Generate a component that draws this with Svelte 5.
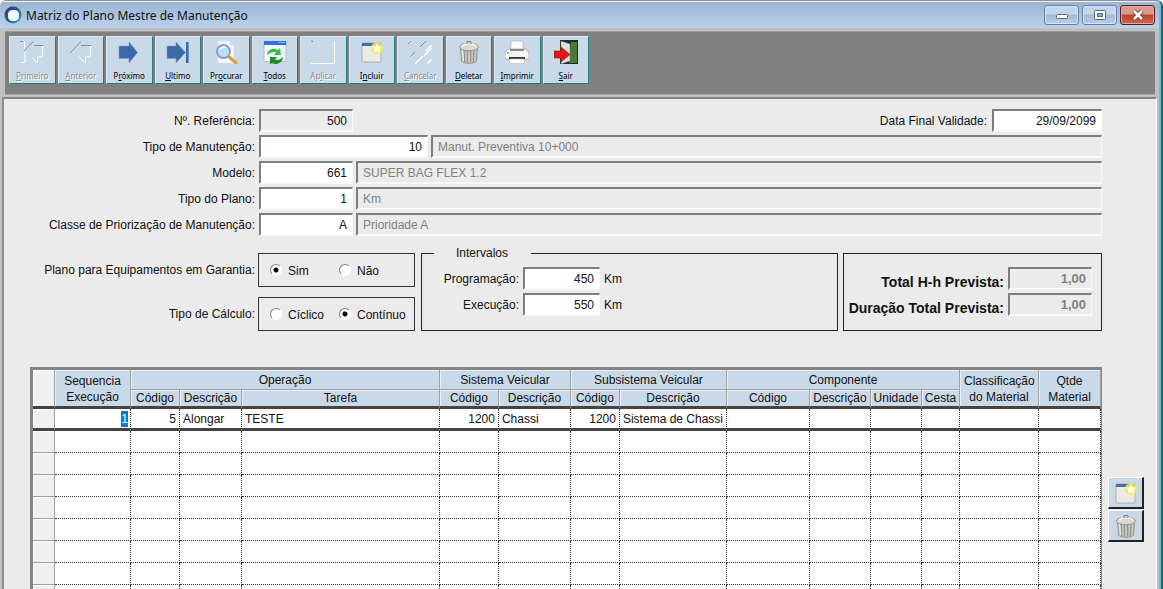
<script lang="ts">
    const tools = [
        { icon: 'first', before: '', key: 'P', after: 'rimeiro', disabled: true },
        { icon: 'prev', before: '', key: 'A', after: 'nterior', disabled: true },
        { icon: 'next', before: 'P', key: 'r', after: 'óximo' },
        { icon: 'last', before: '', key: 'U', after: 'ltimo' },
        { icon: 'search', before: 'Pr', key: 'o', after: 'curar' },
        { icon: 'all', before: '', key: 'T', after: 'odos' },
        { icon: 'apply', before: 'Ap', key: 'l', after: 'icar', disabled: true },
        { icon: 'add', before: 'I', key: 'n', after: 'cluir' },
        { icon: 'cancel', before: '', key: 'C', after: 'ancelar', disabled: true },
        { icon: 'trash', before: '', key: 'D', after: 'eletar' },
        { icon: 'print', before: '', key: 'I', after: 'mprimir' },
        { icon: 'exit', before: '', key: 'S', after: 'air' }
    ]

    const lookups = [
        { id: 'tipo', label: 'Tipo de Manutenção:', value: '10', text: 'Manut. Preventiva 10+000', wide: true },
        { id: 'modelo', label: 'Modelo:', value: '661', text: 'SUPER BAG FLEX 1.2' },
        { id: 'plano', label: 'Tipo do Plano:', value: '1', text: 'Km' },
        { id: 'classe', label: 'Classe de Priorização de Manutenção:', value: 'A', text: 'Prioridade A' }
    ]

    // 0 leaves the column free to take the remaining width
    const widths = [22, 76, 49, 62, 0, 59, 72, 49, 107, 83, 61, 51, 38, 79, 62]
    const columns = ['Código', 'Descrição', 'Tarefa', 'Código', 'Descrição', 'Código', 'Descrição', 'Código', 'Descrição', 'Unidade', 'Cesta']
    const current = ['5', 'Alongar', 'TESTE', '1200', 'Chassi', '1200', 'Sistema de Chassi', '', '', '', '', '', '']
    const emptyRows = Array(12).fill(0)

    let garantia = $state('sim')
    let calculo = $state('continuo')
</script>

{#snippet glyph(name)}
    <svg class="glyph" viewBox="0 0 24 24" aria-hidden="true">
        {#if name === 'first'}
            <path d="M4.500 1v9M5 12v10.500H1M22.500 6v11h-5v5.500h-1l-4-5" fill="none" stroke="#fff" />
            <path d="M0 1.500h3M4 10.500L13.500 1.500M14 5.500h9" fill="none" stroke="#8c8c8c" />
        {:else if name === 'prev'}
            <path d="M21.500 6v11h-5v5.500h-1l-5.500-6" fill="none" stroke="#fff" />
            <path d="M1 13L12 1.500M12 5.500h10" fill="none" stroke="#8c8c8c" />
        {:else if name === 'next'}
            <path d="M2 6h10V2l8.500 10.500L12 23v-4.500H2z" fill="#3a69a8" stroke="#7fa0cc" stroke-width=".6" />
        {:else if name === 'last'}
            <path d="M1 6h9V2l9.500 10.500L10 23v-4.500H1z" fill="#3a69a8" stroke="#7fa0cc" stroke-width=".6" />
            <path d="M20 2h2.600v21H20z" fill="#3a69a8" />
        {:else if name === 'search'}
            <path d="M4 1h12l4 4v18H4z" fill="#f4f7fb" stroke="#d7dfe9" stroke-width=".7" />
            <path d="M16 1v4h4" fill="#cfd8e3" />
            <path d="M15 17l7 6" stroke="#e09a35" stroke-width="3" stroke-linecap="round" />
            <circle cx="9.500" cy="11.500" r="6.500" fill="#b8ddfa" stroke="#8b9cba" stroke-width="1.800" />
            <path d="M5.500 10a4.500 4.500 0 0 1 6-2.500" fill="none" stroke="#fff" stroke-width="1.500" />
        {:else if name === 'all'}
            <rect x="1" y="1.500" width="22" height="20" rx="1" fill="#f3f6fb" stroke="#a7b5cd" stroke-width=".8" />
            <path d="M1 1h22v4H1z" fill="#3270dc" />
            <path d="M15 2h7v1h-7z" fill="#8fb6f3" />
            <path d="M4 15c0-5 6-8 11-5l2-2 1 7h-7l2-2.500c-3-1-5 0-9 2.500z" fill="#36c043" />
            <path d="M20 17c0 5-6 9-11 6l-2 1.500V17h7l-2 2.500c3 1 5 .5 8-2.500z" fill="#1d8d2c" />
        {:else if name === 'apply'}
            <path d="M23.500 1v22.500H0" fill="none" stroke="#fff" />
            <path d="M0 1h1.500v1" fill="none" stroke="#909090" />
        {:else if name === 'add'}
            <rect x="2" y="3" width="19" height="19" rx="1" fill="#eceae4" stroke="#aaa9a3" stroke-width=".9" />
            <path d="M2 3h19v3H2z" fill="#416fb4" />
            <circle cx="17" cy="8" r="6" fill="#f4ef45" opacity=".85" />
            <path d="M17 3l1.500 3.300 3.500.4-2.600 2.400.8 3.600-3.200-1.800-3.200 1.800.8-3.600L12 6.700l3.500-.4z" fill="#fffff0" />
        {:else if name === 'cancel'}
            <path d="M0 4l3-3M12 7l6-6M2 17l5-5" stroke="#8c8c8c" />
            <path d="M18 11l6-6M7 24l8-8M16 16l8-8M19 24l5-5" stroke="#fff" stroke-width="1.400" />
        {:else if name === 'trash'}
            <path d="M3.500 8h17l-1 13c-1 3-14 3-15 0z" fill="#c6c6bf" stroke="#85857e" stroke-width=".8" />
            <path d="M7 10l.7 12M10.300 10v12.500M13.700 10v12.500M17 10l-.7 12" stroke="#8b8b83" />
            <path d="M5.500 10l1 11" stroke="#efefea" stroke-width="1.300" />
            <ellipse cx="12" cy="7" rx="9.500" ry="3.800" fill="#dadad4" stroke="#84847d" stroke-width=".8" />
            <path d="M5 6c3-3 11-3 14 0" fill="none" stroke="#f7f7f4" stroke-width="1.500" />
            <path d="M10 4V1.500h4V4" fill="#ccc" stroke="#777770" stroke-width=".9" />
        {:else if name === 'print'}
            <path d="M6 11V1h12v10z" fill="#fafafa" stroke="#b5b5b5" stroke-width=".7" />
            <path d="M4 9h16c3 1 4 4 4 7v3H0v-3c0-3 1-6 4-7z" fill="#f4f4f4" stroke="#a5a5a5" stroke-width=".7" />
            <path d="M5 9h14v2H5z" fill="#8a8a8a" />
            <path d="M4 17h16v2H4z" fill="#333" />
            <path d="M5 19h14v4.500H5z" fill="#fff" stroke="#bcbcbc" stroke-width=".6" />
            <path d="M2 12h1.500v1.500H2z" fill="#42c540" />
        {:else if name === 'exit'}
            <path d="M6 0h18v24H6z" fill="#202d20" />
            <path d="M17 2h6v21h-8z" fill="#497a35" />
            <path d="M7 1l9 3v17l-9 3z" fill="#dfe2e5" stroke="#777" stroke-width=".6" />
            <path d="M0 11h7V7l9 7.500L7 22v-4H0z" fill="#e01a1a" stroke="#931515" stroke-width=".6" />
        {/if}
    </svg>
{/snippet}

<div class="window">
    <header class="title-bar">
        <svg class="logo" viewBox="0 0 18 18" aria-hidden="true">
            <defs>
                <linearGradient id="ring" x1="0" y1="0" x2="1" y2="1">
                    <stop offset="0" stop-color="#2f2f72" />
                    <stop offset=".5" stop-color="#255e8c" />
                    <stop offset="1" stop-color="#38b3b8" />
                </linearGradient>
            </defs>
            <circle cx="9" cy="9" r="8.500" fill="url(#ring)" />
            <rect x="4" y="4" width="11" height="11" rx="4.500" fill="#f3fafd" />
        </svg>
        <h1>Matriz do Plano Mestre de Manutenção</h1>
        <div class="caption-buttons">
            <button aria-label="Minimizar">
                <svg viewBox="0 0 14 12"><rect x="1.500" y="5.500" width="11" height="4" rx="1" fill="#fff" stroke="#5d6675" /></svg>
            </button>
            <button aria-label="Restaurar">
                <svg viewBox="0 0 14 12"><rect x="1.500" y="1.500" width="11" height="9" rx="1" fill="#fff" stroke="#5d6675" /><rect x="4.500" y="4.500" width="5" height="3" fill="#91acd0" stroke="#5d6675" /></svg>
            </button>
            <button class="close" aria-label="Fechar">
                <svg viewBox="0 0 14 12"><path d="M3 2l8 8M11 2l-8 8" stroke="#6a3439" stroke-width="4.500" /><path d="M3 2l8 8M11 2l-8 8" stroke="#fff" stroke-width="2.600" /></svg>
            </button>
        </div>
    </header>

    <div class="toolbar">
        <div class="tools">
            {#each tools as tool}
                <button class="tool" disabled={tool.disabled}>
                    {@render glyph(tool.icon)}
                    <span>{tool.before}<u>{tool.key}</u>{tool.after}</span>
                </button>
            {/each}
        </div>
    </div>

    <main>
        <form>
            <div class="row">
                <label class="caption" for="referencia">Nº. Referência:</label>
                <input id="referencia" class="code" value="500" readonly />
                <label class="push" for="validade">Data Final Validade:</label>
                <input id="validade" class="date" value="29/09/2099" />
            </div>
            {#each lookups as item}
                <div class="row">
                    <label class="caption" for={item.id}>{item.label}</label>
                    <input id={item.id} class="code" class:wide={item.wide} value={item.value} />
                    <input class="description" aria-label="Descrição {item.label}" value={item.text} disabled />
                </div>
            {/each}

            <div class="groups">
                <span class="caption" id="garantia">Plano para Equipamentos em Garantia:</span>
                <div class="options" role="radiogroup" aria-labelledby="garantia">
                    <label><input type="radio" name="garantia" value="sim" bind:group={garantia} />Sim</label>
                    <label><input type="radio" name="garantia" value="nao" bind:group={garantia} />Não</label>
                </div>
                <span class="caption" id="calculo">Tipo de Cálculo:</span>
                <div class="options" role="radiogroup" aria-labelledby="calculo">
                    <label><input type="radio" name="calculo" value="ciclico" bind:group={calculo} />Cíclico</label>
                    <label><input type="radio" name="calculo" value="continuo" bind:group={calculo} />Contínuo</label>
                </div>

                <fieldset class="intervals">
                    <legend>Intervalos</legend>
                    <div class="pair">
                        <label for="programacao">Programação:</label>
                        <input id="programacao" value="450" />
                        <span>Km</span>
                    </div>
                    <div class="pair">
                        <label for="execucao">Execução:</label>
                        <input id="execucao" value="550" />
                        <span>Km</span>
                    </div>
                </fieldset>

                <div class="totals">
                    <div class="total">
                        <label for="horas">Total H-h Prevista:</label>
                        <input id="horas" value="1,00" disabled />
                    </div>
                    <div class="total">
                        <label for="duracao">Duração Total Prevista:</label>
                        <input id="duracao" value="1,00" disabled />
                    </div>
                </div>
            </div>
        </form>

        <div class="lower">
            <div class="grid">
                <table>
                    <colgroup>
                        {#each widths as w}
                            <col style:width={w ? `${w}px` : 'auto'} />
                        {/each}
                    </colgroup>
                    <thead>
                        <tr>
                            <th class="selector" rowspan="2"></th>
                            <th class="tall" rowspan="2">Sequencia Execução</th>
                            <th colspan="3">Operação</th>
                            <th colspan="2">Sistema Veicular</th>
                            <th colspan="2">Subsistema Veicular</th>
                            <th colspan="4">Componente</th>
                            <th class="tall" rowspan="2">Classificação do Material</th>
                            <th class="tall" rowspan="2">Qtde Material</th>
                        </tr>
                        <tr class="sub">
                            {#each columns as column}
                                <th>{column}</th>
                            {/each}
                        </tr>
                    </thead>
                    <tbody>
                        <tr class="current">
                            <th class="selector"></th>
                            <td class="number"><mark>1</mark></td>
                            {#each current as value}
                                <td class:number={/^\d+$/.test(value)}>{value}</td>
                            {/each}
                        </tr>
                        {#each emptyRows as _}
                            <tr>
                                <th class="selector"></th>
                                {#each widths.slice(1) as _}
                                    <td></td>
                                {/each}
                            </tr>
                        {/each}
                    </tbody>
                </table>
            </div>
            <div class="side">
                <button aria-label="Incluir linha">{@render glyph('add')}</button>
                <button aria-label="Deletar linha">{@render glyph('trash')}</button>
            </div>
        </div>
    </main>
</div>

<style>
    :global(body) {
        margin: 0;
    }

    * {
        box-sizing: border-box;
    }

    .window {
        height: 100vh;
        display: flex;
        flex-direction: column;
        overflow: hidden;
        background: #c0c0c0;
        border-top: 1px solid #8e9093;
        border-right: 2px solid #44525c;
        border-radius: 6px 6px 0 0;
        box-shadow: inset -2px 0 #5cc4de;
        font-family: "Liberation Sans", Arial, sans-serif;
        font-size: 12px;
        line-height: 16px;
        color: #111;
    }

    button {
        padding: 0;
        font: inherit;
        color: inherit;
    }

    .title-bar {
        flex: none;
        height: 27px;
        margin-right: 2px;
        padding: 0 4px;
        display: flex;
        align-items: center;
        gap: 4px;
        background: linear-gradient(#9ab3d1, #bad2ed);
        border-top: 1px solid #eef4fb;
        border-radius: 5px 5px 0 0;
    }

    .logo {
        width: 18px;
        height: 18px;
    }

    h1 {
        margin: 0;
        font: 12px "Noto Sans", "Open Sans", sans-serif;
        color: #111;
    }

    .caption-buttons {
        margin-left: auto;
        display: flex;
        gap: 3px;
    }

    .caption-buttons button {
        width: 35px;
        height: 20px;
        display: flex;
        align-items: center;
        justify-content: center;
        border: 1px solid #67809f;
        border-radius: 3px;
        background: linear-gradient(#c3d5ea 45%, #a3bad6 50%, #b9d0ea);
        box-shadow: inset 0 0 0 1px #d5e3f3;
    }

    .caption-buttons .close {
        border-color: #50202a;
        background: linear-gradient(#dc9a8c 45%, #bd3f2a 50%, #cf6a4c);
        box-shadow: inset 0 0 0 1px #e2a99d;
    }

    .caption-buttons svg {
        width: 14px;
        height: 12px;
    }

    .toolbar {
        flex: none;
        margin: 4px 6px 3px 5px;
        padding: 4px 4px 10px;
        background: #808080;
        box-shadow: 0 -1px #999, 0 1px #a8a8a8;
    }

    .tools {
        width: 580px;
        display: grid;
        grid-template-columns: repeat(12, 1fr);
        gap: 2px;
    }

    .tool {
        height: 48px;
        display: flex;
        flex-direction: column;
        align-items: center;
        padding-top: 3px;
        gap: 6px;
        border: 1px solid #dbe7f2;
        border-right: 1px solid #1f7f83;
        border-bottom: 1px solid #1f7f83;
        background: #c9d9e8;
        font: 8px/12px "Noto Sans", "Open Sans", sans-serif;
        color: #000;
    }

    .tool:disabled {
        color: #8c8c8c;
        text-shadow: 1px 1px #fff;
    }

    .glyph {
        width: 24px;
        height: 24px;
        flex: none;
    }

    main {
        flex: 1;
        min-height: 0;
        margin: 0 4px 0 2px;
        padding: 10px 0 0 26px;
        display: flex;
        flex-direction: column;
        border-top: 2px solid #858585;
        border-left: 2px solid #8c8c8c;
        border-right: 1px solid #f8f8f8;
        background: #ebebeb;
    }

    form {
        display: flex;
        flex-direction: column;
        gap: 3px;
        padding-right: 54px;
    }

    .row {
        display: flex;
        align-items: center;
        gap: 3px;
    }

    .caption {
        width: 226px;
        padding-right: 1px;
        flex: none;
        text-align: right;
        white-space: nowrap;
    }

    input {
        min-width: 0;
        height: 23px;
        padding: 0 5px;
        border: 2px solid #7e7e7e;
        border-right: 1px solid #f8f8f8;
        border-bottom: 2px solid #f8f8f8;
        border-radius: 0;
        background: #fff;
        font: inherit;
        color: #111;
        text-align: right;
    }

    input[readonly] {
        background: #ebebeb;
    }

    input:disabled {
        background: #ebebeb;
        color: #808080;
    }

    .code {
        width: 94px;
    }

    .code.wide {
        width: 169px;
    }

    .description {
        flex: 1;
        text-align: left;
    }

    .push {
        margin-left: auto;
    }

    .date {
        width: 110px;
        margin-left: 2px;
    }

    .groups {
        margin-top: 14px;
        display: grid;
        grid-template-columns: 225px 157px minmax(0, 1fr) 259px;
        grid-template-rows: 34px 34px;
        gap: 10px 0;
    }

    .groups .caption {
        width: auto;
        padding: 9px 0 0;
    }

    .options {
        margin-left: 3px;
        margin-right: -3px;
        padding-left: 11px;
        display: flex;
        align-items: center;
        border: 1px solid #333;
    }

    .options label {
        width: 69px;
        display: flex;
        align-items: center;
        gap: 6px;
        padding-top: 2px;
        white-space: nowrap;
    }

    input[type="radio"] {
        appearance: none;
        flex: none;
        width: 12px;
        height: 12px;
        margin: 0 0 3px;
        padding: 0;
        border: 1px solid;
        border-color: #808080 #fff #fff #808080;
        border-radius: 50%;
        background: #fff;
    }

    input[type="radio"]:checked {
        background: radial-gradient(circle, #000 2px, #fff 3px);
    }

    .intervals {
        grid-column: 3;
        grid-row: 1 / 3;
        min-width: 0;
        margin: -8px 5px 0 9px;
        padding: 6px 0 0 15px;
        border: 1px solid #222;
    }

    legend {
        width: 97px;
        margin-left: -3px;
        padding-left: 22px;
        line-height: 16px;
    }

    .pair,
    .total {
        display: flex;
        align-items: center;
        gap: 4px;
        margin-bottom: 3px;
    }

    .pair label {
        width: 82px;
        text-align: right;
    }

    .pair input {
        width: 77px;
    }

    .totals {
        grid-column: 4;
        grid-row: 1 / 3;
        padding: 13px 9px 0 0;
        border: 1px solid #222;
    }

    .total {
        justify-content: flex-end;
        align-items: flex-end;
        font-size: 14px;
        font-weight: bold;
    }

    .total input {
        width: 84px;
        font-size: 13px;
    }

    .lower {
        flex: 1;
        min-height: 0;
        margin-top: 36px;
        display: flex;
        gap: 6px;
    }

    .grid {
        flex: 1;
        min-width: 0;
        overflow: hidden;
        border: solid #858585;
        border-width: 3px 1px 0 3px;
        background: #fff;
    }

    table {
        width: 100%;
        table-layout: fixed;
        border-collapse: separate;
        border-spacing: 0;
    }

    th {
        height: 20px;
        padding: 0;
        border-right: 1px solid #a0a0a0;
        border-bottom: 1px solid #a0a0a0;
        background: #c9d9e8;
        box-shadow: inset 1px 1px #e8eff6;
        font-weight: normal;
        line-height: 16px;
        vertical-align: middle;
        white-space: nowrap;
    }

    .sub th,
    .tall,
    thead .selector {
        border-bottom: 3px solid #454242;
    }

    .sub th {
        height: 19px;
    }

    .tall {
        padding: 2px 4px 0;
        white-space: normal;
    }

    .selector {
        background: #f0f0f0;
        box-shadow: inset 1px 1px #fff;
    }

    td {
        height: 22px;
        padding: 0 3px;
        border-right: 1px dotted #333;
        border-bottom: 1px dotted #333;
        white-space: nowrap;
        overflow: hidden;
    }

    .current td,
    .current .selector {
        height: 22px;
        border-bottom: 3px solid #454242;
    }

    .number {
        text-align: right;
    }

    mark {
        display: inline-block;
        margin-right: -1px;
        background: #0a78d7;
        color: #fff;
    }

    .side {
        width: 48px;
        padding-top: 110px;
        display: flex;
        flex-direction: column;
        gap: 1px;
    }

    .side button {
        width: 36px;
        height: 32px;
        display: flex;
        align-items: center;
        justify-content: center;
        border: 1px solid #fff;
        border-right: 2px solid #222;
        border-bottom: 2px solid #222;
        background: #c9d9e8;
    }
</style>
